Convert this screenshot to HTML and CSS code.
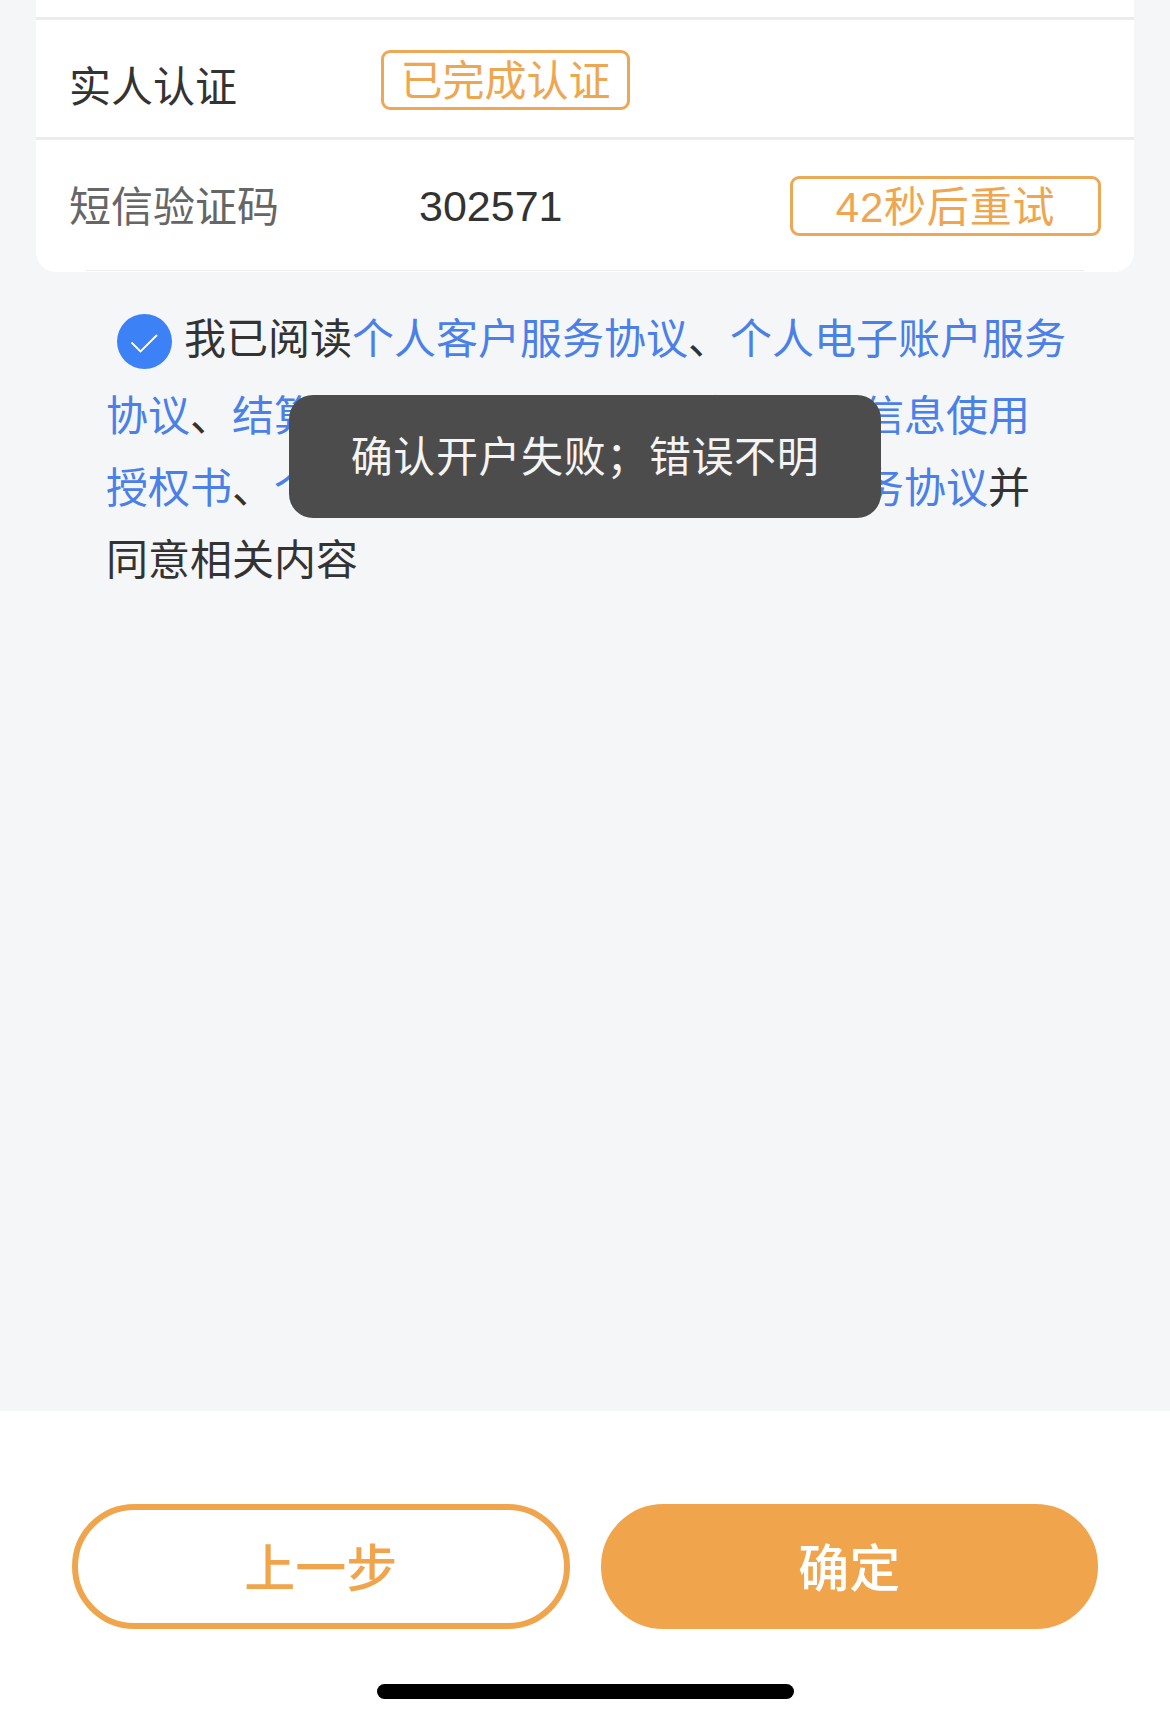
FILE: index.html
```html
<!DOCTYPE html>
<html lang="zh-CN">
<head>
<meta charset="utf-8">
<title>确认开户</title>
<link rel="stylesheet" href="styles.css">
</head>
<body>
<div class="page">
  <main class="content">
    <section class="card">
      <div class="stub"></div>
      <div class="row row-auth">
        <span class="label label-dark">实人认证</span>
        <span class="tag tag-done">已完成认证</span>
      </div>
      <div class="row row-sms">
        <span class="label label-grey">短信验证码</span>
        <span class="code">302571</span>
        <span class="tag tag-retry">42秒后重试</span>
      </div>
    </section>
    <p class="agree"><svg class="check" viewBox="0 0 55 55" aria-hidden="true"><circle cx="27.5" cy="27.5" r="27.5" fill="#3c82f6"/><path d="M14.5 28.5 L23.5 37.5 L40 21" fill="none" stroke="#fff" stroke-width="1.8"/></svg>我已阅读<a>个人客户服务协议</a>、<a>个人电子账户服务协议</a>、<a>结算账户开立服务协议</a>、<a>客户个人信息使用授权书</a>、<a>个人结算账户资金委托管理类服务协议</a>并同意相关内容</p>
  </main>
  <footer class="footer">
    <div class="actions">
      <button class="btn btn-outline">上一步</button>
      <button class="btn btn-solid">确定</button>
    </div>
    <div class="home-bar"></div>
  </footer>
  <div class="toast">确认开户失败；错误不明</div>
</div>
</body>
</html>
```
FILE: styles.css
```css
* { box-sizing: border-box; }
html, body { margin: 0; padding: 0; }
body {
  font-family: "Liberation Sans", "Noto Sans CJK SC", sans-serif;
  font-size: 42px;
  color: #333;
}
.page {
  position: relative;
  width: 1170px;
  height: 1723px;
  overflow: hidden;
  display: flex;
  flex-direction: column;
  background: #f5f6f8;
}
.content { flex: 1; }
.card {
  margin: 0 36px;
  background: #fff;
  border-radius: 0 0 20px 20px;
  height: 272px;
}
.stub { height: 20px; border-bottom: 3px solid #ebecee; }
.row { display: flex; align-items: center; padding: 0 33px 0 33px; }
.row-auth { height: 120px; border-bottom: 3px solid #ebecee; padding-bottom: 3px; }
.row-sms { height: 132px; position: relative; border-bottom: 0; }
.row-sms::after {
  content: "";
  position: absolute;
  left: 50px;
  right: 50px;
  bottom: 1px;
  height: 1px;
  background: #ececee;
}
.label { width: 312px; flex: none; }
.label-dark { color: #333; margin-top: 13px; }
.label-grey { color: #666; margin-top: -5px; }
.tag {
  display: flex;
  align-items: center;
  justify-content: center;
  border: 3px solid #eca855;
  border-radius: 9px;
  color: #eea650;
}
.tag-done { width: 249px; height: 60px; margin-top: 5px; padding-bottom: 4px; }
.code { flex: 1; padding-left: 38px; margin-top: 1px; font-size: 43px; }
.tag-retry { width: 311px; height: 60px; margin-top: 0; padding-bottom: 6px; letter-spacing: 0.8px; }
.agree {
  margin: 32px 0 0;
  padding: 0 102px 0 106px;
  line-height: 72px;
}
.agree a { color: #4a80e8; }
.check {
  display: inline-block;
  width: 55px;
  height: 55px;
  margin: 0 12px 12px 11px;
  vertical-align: -27px;
}
.footer { height: 312px; background: #fff; }
.actions {
  display: flex;
  gap: 31px;
  padding: 93px 72px 0;
}
.btn {
  flex: 1;
  height: 125px;
  padding: 0 0 4px;
  border-radius: 63px;
  border: 6px solid #f0a54d;
  font-family: inherit;
  font-size: 51px;
  font-weight: 500;
}
.btn-outline { background: #fff; color: #f0a54d; }
.btn-solid { background: #f0a54d; color: #fff; }
.home-bar {
  width: 417px;
  height: 15px;
  margin: 55px auto 0;
  background: #000;
  border-radius: 8px;
}
.toast {
  position: absolute;
  left: 289px;
  top: 395px;
  width: 592px;
  height: 123px;
  padding-bottom: 6px;
  display: flex;
  align-items: center;
  justify-content: center;
  background: #4c4c4c;
  border-radius: 24px;
  color: #f4f4f4;
  letter-spacing: 0.6px;
}
```
